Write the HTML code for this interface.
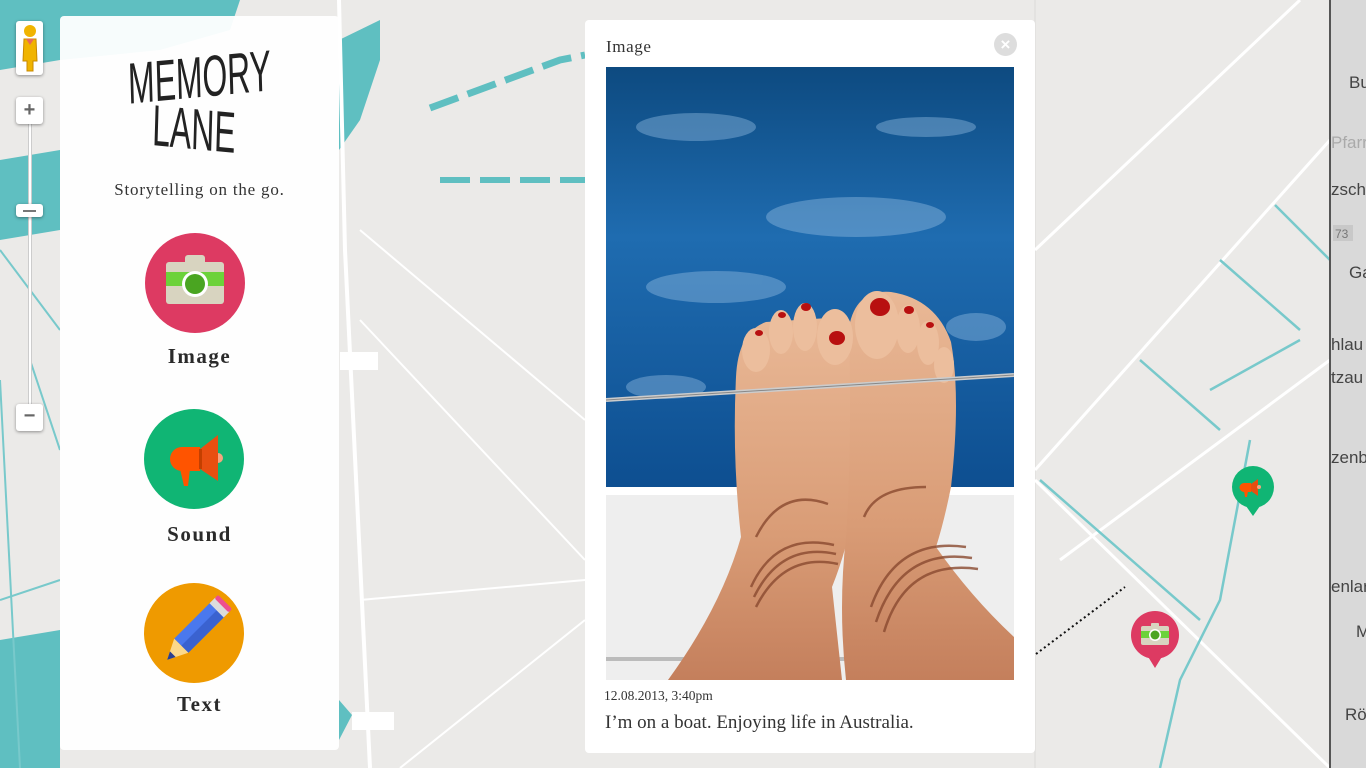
<!DOCTYPE html>
<html><head><meta charset="utf-8"><style>
*{margin:0;padding:0;box-sizing:border-box}
body{width:1366px;height:768px;overflow:hidden;background:#ebeae8;position:relative;font-family:"Liberation Serif",serif}
.abs{position:absolute}
.panel{left:60px;top:16px;width:279px;height:734px;background:rgba(255,255,255,0.95);border-radius:4px}
.circ{position:absolute;width:100px;height:100px;border-radius:50%}
.lbl{position:absolute;width:279px;text-align:center;font-weight:bold;font-size:21px;letter-spacing:1.5px;color:#2a2a2a;left:0}
.popup{left:585px;top:20px;width:450px;height:733px;background:#fff;border-radius:4px}
</style></head><body>
<svg class="abs" style="left:0;top:0" width="1366" height="768">
<rect width="1366" height="768" fill="#ebeae8"/>
<path d="M0 0 H240 L230 30 L160 50 L60 60 L0 70Z" fill="#5fbfc1"/>
<path d="M0 160 L60 150 L60 230 L0 240Z" fill="#5fbfc1"/>
<path d="M0 640 L60 630 L60 768 L0 768Z" fill="#5fbfc1"/>
<path d="M339 40 L380 20 L380 60 L360 120 L339 150Z" fill="#5fbfc1"/>
<path d="M339 700 L352 715 L339 740Z" fill="#5fbfc1"/>
<path d="M430 108 L560 60 L585 55" stroke="#5fbfc1" stroke-width="7" fill="none" stroke-dasharray="30 10"/>
<path d="M440 180 L585 180" stroke="#5fbfc1" stroke-width="6" fill="none" stroke-dasharray="30 10"/>
<path d="M339 0 L345 250 L370 768" stroke="#fff" stroke-width="4" fill="none"/>
<path d="M360 230 L585 420 M360 320 L585 560 M360 600 L585 580 M400 768 L585 620" stroke="#fff" stroke-width="2" fill="none"/>
<rect x="340" y="352" width="38" height="18" fill="#fff"/>
<rect x="352" y="712" width="42" height="18" fill="#fff"/>
<path d="M1035 0 L1035 768" stroke="#e3e2e0" stroke-width="2"/>
<path d="M1035 470 L1330 140 M1060 560 L1330 360 M1035 480 L1330 768 M1035 250 L1300 0" stroke="#fff" stroke-width="3" fill="none"/>
<path d="M1040 480 L1200 620 M1275 205 L1330 260 M1220 260 L1300 330 M1140 360 L1220 430 M1250 440 L1220 600 L1180 680 L1160 768 M1210 390 L1300 340" stroke="#78c9cb" stroke-width="2.5" fill="none"/>
<path d="M0 250 L60 330 M0 380 L20 768 M0 600 L60 580 M30 360 L60 450" stroke="#78c9cb" stroke-width="2" fill="none"/>
<path d="M1036 654 L1125 587" stroke="#111" stroke-width="2" stroke-dasharray="2 3"/>
<rect x="1331" y="0" width="35" height="768" fill="#d9d9d9"/>
<rect x="1329" y="0" width="2" height="768" fill="#555"/>
<g font-family="Liberation Sans" font-size="17" fill="#444">
<text x="1349" y="88">Bu</text><text x="1331" y="148" fill="#aaa">Pfarr</text><text x="1331" y="195">zsch</text>
<text x="1349" y="278">Ga</text><text x="1331" y="350">hlau</text><text x="1331" y="383">tzau</text>
<text x="1331" y="463">zenb</text><text x="1331" y="592">enlar</text><text x="1356" y="637">M</text><text x="1345" y="720">Rö</text>
</g>
<rect x="1333" y="225" width="20" height="16" fill="#c8c8c8"/><text x="1335" y="238" font-family="Liberation Sans" font-size="12" fill="#777">73</text>
</svg>

<div class="abs" style="left:16px;top:21px;width:27px;height:54px;background:#fff;border-radius:3px;box-shadow:0 1px 3px rgba(0,0,0,.4)">
<svg width="27" height="54"><circle cx="14" cy="10" r="6" fill="#f0b400"/><path d="M8 18 H20 L21 40 H17 V50 H11 V40 H7Z" fill="#f0b400" stroke="#c88a00"/><path d="M10 18 L14 24 L18 18Z" fill="#e86a5a"/></svg></div>
<div class="abs" style="left:28px;top:120px;width:4px;height:290px;background:#fff;border:1px solid #ccc"></div>
<div class="abs" style="left:16px;top:97px;width:27px;height:27px;background:#fff;border-radius:3px;box-shadow:0 1px 3px rgba(0,0,0,.4);font:bold 20px 'Liberation Sans';color:#666;text-align:center;line-height:26px">+</div>
<div class="abs" style="left:16px;top:204px;width:27px;height:13px;background:#fff;border-radius:3px;box-shadow:0 1px 3px rgba(0,0,0,.4)"><div style="margin:6px 7px;height:2px;background:#777"></div></div>
<div class="abs" style="left:16px;top:404px;width:27px;height:27px;background:#fff;border-radius:3px;box-shadow:0 1px 3px rgba(0,0,0,.4);font:bold 20px 'Liberation Sans';color:#666;text-align:center;line-height:25px">−</div>

<div class="abs panel">
<div class="abs" style="left:0;top:36px;width:279px;text-align:center;font-family:'Liberation Sans',sans-serif;font-size:58px;line-height:52px;color:#222;transform:scaleX(.55)"><div style="transform:rotate(-3deg)">MEMORY</div><div style="transform:rotate(3deg);margin-left:-20px">LANE</div></div>
<div class="abs" style="left:0;top:164px;width:279px;text-align:center;font-size:17px;letter-spacing:.8px;color:#333">Storytelling on the go.</div>
<div class="circ" style="left:85px;top:217px;background:#dd3a62">
<svg width="100" height="100"><rect x="40" y="22" width="20" height="10" rx="3" fill="#d8d4c0"/><rect x="21" y="29" width="58" height="42" rx="3" fill="#d8d4c0"/><rect x="21" y="39" width="58" height="14" fill="#6cd23a"/><circle cx="50" cy="51" r="13" fill="#fff"/><circle cx="50" cy="51" r="10" fill="#4aa521"/></svg></div>
<div class="lbl" style="top:328px">Image</div>
<div class="circ" style="left:84px;top:393px;background:#10b574">
<svg width="100" height="100"><path d="M38 38 H56 V62 H38 A12 12 0 0 1 38 38Z" fill="#ff5400"/><path d="M36 60 L46 60 L44 77 L40 77Z" fill="#ff5400"/><path d="M56 40 L74 26 V72 L56 60Z" fill="#e84f10"/><rect x="55" y="40" width="3" height="20" fill="#c43f00"/><path d="M74 44 A5 5 0 0 1 74 54Z" fill="#f5a47f"/></svg></div>
<div class="lbl" style="top:506px">Sound</div>
<div class="circ" style="left:84px;top:567px;background:#ef9a00">
<svg width="100" height="100"><g transform="rotate(45 50 50)"><rect x="40" y="16" width="20" height="52" fill="#4a78ee"/><rect x="50" y="16" width="10" height="52" fill="#3a62d0"/><rect x="40" y="10" width="20" height="8" fill="#dcdcdc"/><rect x="40" y="6" width="20" height="5" rx="2" fill="#ee4f8f"/><path d="M40 68 H60 L50 88Z" fill="#fcd889"/><path d="M46 80 H54 L50 88Z" fill="#2a3f90"/></g></svg></div>
<div class="lbl" style="top:676px">Text</div>
</div>

<div class="abs popup">
<div class="abs" style="left:21px;top:17px;font-size:17px;letter-spacing:.6px;color:#333">Image</div>
<div class="abs" style="left:409px;top:13px;width:23px;height:23px;border-radius:50%;background:#ddd;color:#fff;font:bold 17px 'Liberation Sans';text-align:center;line-height:23px">×</div>
<svg class="abs" style="left:21px;top:47px" width="408" height="613">
<defs><linearGradient id="sea" x1="0" y1="0" x2="0" y2="1"><stop offset="0" stop-color="#0d4a80"/><stop offset=".4" stop-color="#1f6cb0"/><stop offset="1" stop-color="#0d4e90"/></linearGradient>
<linearGradient id="skin" x1="0" y1="0" x2="0" y2="1"><stop offset="0" stop-color="#e9b896"/><stop offset=".6" stop-color="#d99c76"/><stop offset="1" stop-color="#c47f5c"/></linearGradient></defs>
<rect width="408" height="425" fill="url(#sea)"/>
<g fill="#9cc3e6" opacity=".4"><ellipse cx="90" cy="60" rx="60" ry="14"/><ellipse cx="250" cy="150" rx="90" ry="20"/><ellipse cx="110" cy="220" rx="70" ry="16"/><ellipse cx="320" cy="60" rx="50" ry="10"/><ellipse cx="60" cy="320" rx="40" ry="12"/><ellipse cx="370" cy="260" rx="30" ry="14"/></g>
<rect y="420" width="408" height="193" fill="#eeeeee"/>
<rect y="420" width="408" height="8" fill="#fff"/>
<rect y="590" width="408" height="4" fill="#bbb"/>
<path d="M130 310 Q132 265 160 255 L238 250 Q252 260 248 310 L250 420 Q246 470 226 520 L236 613 L62 613 Q115 540 135 470 Q126 390 130 310Z" fill="url(#skin)"/>
<path d="M243 260 Q250 222 285 225 Q330 232 345 275 Q355 330 345 420 Q338 455 330 480 Q365 530 408 570 V613 H240 Q232 540 240 470 Q246 380 243 260Z" fill="url(#skin)"/>
<g fill="#ecbe9d"><ellipse cx="150" cy="283" rx="14" ry="22"/><ellipse cx="175" cy="265" rx="12" ry="22"/><ellipse cx="199" cy="260" rx="12" ry="24"/><ellipse cx="229" cy="270" rx="18" ry="28"/><ellipse cx="271" cy="258" rx="22" ry="34"/><ellipse cx="302" cy="262" rx="12" ry="24"/><ellipse cx="322" cy="276" rx="11" ry="22"/><ellipse cx="338" cy="298" rx="10" ry="18"/></g>
<g fill="#b81010"><ellipse cx="153" cy="266" rx="4" ry="3"/><ellipse cx="176" cy="248" rx="4" ry="3"/><ellipse cx="200" cy="240" rx="5" ry="4"/><ellipse cx="231" cy="271" rx="8" ry="7"/><ellipse cx="274" cy="240" rx="10" ry="9"/><ellipse cx="303" cy="243" rx="5" ry="4"/><ellipse cx="324" cy="258" rx="4" ry="3"/></g>
<path d="M0 333 L408 308" stroke="#ccc" stroke-width="4"/>
<path d="M0 333 L408 308" stroke="#888" stroke-width="1"/>
<g stroke="#8a4a30" stroke-width="2.5" fill="none" opacity=".8"><path d="M150 470 Q175 420 222 437"/><path d="M145 520 Q170 465 228 478"/><path d="M148 530 Q175 475 230 487"/><path d="M150 540 Q178 485 232 497"/><path d="M258 450 Q270 420 320 420"/><path d="M265 540 Q290 470 360 480"/><path d="M270 555 Q295 480 366 491"/><path d="M278 565 Q300 492 372 502"/></g>
</svg>
<div class="abs" style="left:19px;top:668px;font-size:13.5px;color:#333">12.08.2013, 3:40pm</div>
<div class="abs" style="left:20px;top:692px;font-size:19px;color:#333">I’m on a boat. Enjoying life in Australia.</div>
</div>

<svg class="abs" style="left:1230px;top:466px" width="46" height="52"><circle cx="23" cy="21" r="21" fill="#10b574"/><path d="M16 40 L23 50 L30 40Z" fill="#10b574"/><path d="M14 17 H21 V26 H14 A4.5 4.5 0 0 1 14 17Z" fill="#ff5400"/><path d="M14 25 H18 L17 31 H15Z" fill="#ff5400"/><path d="M21 18 L28 13 V30 L21 25Z" fill="#e84f10"/><circle cx="29" cy="21" r="2" fill="#f5a47f"/></svg>
<svg class="abs" style="left:1130px;top:611px" width="50" height="58"><circle cx="25" cy="24" r="24" fill="#dd3a62"/><path d="M17 44 L25 57 L33 44Z" fill="#dd3a62"/><rect x="21" y="12" width="8" height="4" rx="1" fill="#d8d4c0"/><rect x="11" y="15" width="28" height="19" rx="2" fill="#d8d4c0"/><rect x="11" y="20" width="28" height="7" fill="#6cd23a"/><circle cx="25" cy="24" r="6" fill="#fff"/><circle cx="25" cy="24" r="4.5" fill="#4aa521"/></svg>
</body></html>
